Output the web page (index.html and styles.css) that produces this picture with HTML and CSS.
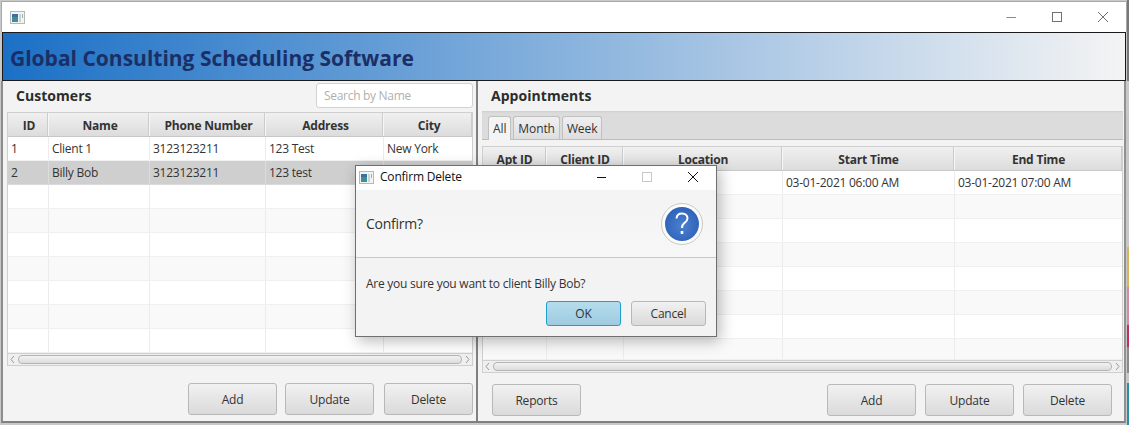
FILE: index.html
```html
<!DOCTYPE html>
<html lang="en">
<head>
<meta charset="utf-8">
<title>Global Consulting Scheduling Software</title>
<link rel="stylesheet" href="styles.css">
</head>
<body>
<div class="window">
  <div class="titlebar">
    <svg class="appicon" width="15" height="13" viewBox="0 0 15 13"><rect x="0.5" y="0.5" width="14" height="12" fill="#f2f4f4" stroke="#b4b8b8"/><rect x="2" y="3" width="6" height="8" fill="#3f8f92"/><rect x="2" y="3" width="6" height="3" fill="#3d6ea0"/><rect x="9" y="3" width="2" height="8" fill="#c4d8d2"/><rect x="12" y="3" width="1" height="4" fill="#9fb0a8"/></svg>
    <div class="winctrls">
      <svg width="12" height="12" viewBox="0 0 12 12"><path d="M1.5 6.5H11" stroke="#8a8a8a" fill="none"/></svg>
      <svg width="12" height="12" viewBox="0 0 12 12"><rect x="1.5" y="1.5" width="9" height="9" stroke="#707070" fill="none"/></svg>
      <svg width="12" height="12" viewBox="0 0 12 12"><path d="M1 1L11 11M11 1L1 11" stroke="#707070" fill="none"/></svg>
    </div>
  </div>
  <header class="banner"><h1>Global Consulting Scheduling Software</h1></header>
  <main class="panes">
    <section class="pane pane-left">
      <div class="panehead">
        <h2>Customers</h2>
        <div class="search">Search by Name</div>
      </div>
      <div class="table table-cust">
        <div class="row headrow"><div>ID</div><div>Name</div><div>Phone Number</div><div>Address</div><div>City</div></div>
        <div class="row"><div>1</div><div>Client 1</div><div>3123123211</div><div>123 Test</div><div>New York</div></div>
        <div class="row selected"><div>2</div><div>Billy Bob</div><div>3123123211</div><div>123 test</div><div></div></div>
        <div class="row"><div></div><div></div><div></div><div></div><div></div></div>
        <div class="row alt"><div></div><div></div><div></div><div></div><div></div></div>
        <div class="row"><div></div><div></div><div></div><div></div><div></div></div>
        <div class="row alt"><div></div><div></div><div></div><div></div><div></div></div>
        <div class="row"><div></div><div></div><div></div><div></div><div></div></div>
        <div class="row alt"><div></div><div></div><div></div><div></div><div></div></div>
        <div class="row"><div></div><div></div><div></div><div></div><div></div></div>
        <div class="scrollbar"><svg width="7" height="9" viewBox="0 0 7 9"><path d="M5 1L2 4.5L5 8" stroke="#9a9a9a" fill="none"/></svg><div class="thumb"></div><svg width="7" height="9" viewBox="0 0 7 9"><path d="M2 1L5 4.5L2 8" stroke="#9a9a9a" fill="none"/></svg></div>
      </div>
      <div class="actions actions-left">
        <button class="btn">Add</button><button class="btn">Update</button><button class="btn">Delete</button>
      </div>
    </section>
    <section class="pane pane-right">
      <div class="panehead"><h2>Appointments</h2></div>
      <div class="tabs">
        <div class="tab active">All</div><div class="tab">Month</div><div class="tab">Week</div>
      </div>
      <div class="table table-appt">
        <div class="row headrow"><div>Apt ID</div><div>Client ID</div><div>Location</div><div>Start Time</div><div>End Time</div></div>
        <div class="row"><div></div><div></div><div>New York</div><div>03-01-2021 06:00 AM</div><div>03-01-2021 07:00 AM</div></div>
        <div class="row alt"><div></div><div></div><div></div><div></div><div></div></div>
        <div class="row"><div></div><div></div><div></div><div></div><div></div></div>
        <div class="row alt"><div></div><div></div><div></div><div></div><div></div></div>
        <div class="row"><div></div><div></div><div></div><div></div><div></div></div>
        <div class="row alt"><div></div><div></div><div></div><div></div><div></div></div>
        <div class="row"><div></div><div></div><div></div><div></div><div></div></div>
        <div class="row alt short"><div></div><div></div><div></div><div></div><div></div></div>
        <div class="scrollbar"><svg width="7" height="9" viewBox="0 0 7 9"><path d="M5 1L2 4.5L5 8" stroke="#9a9a9a" fill="none"/></svg><div class="thumb"></div><svg width="7" height="9" viewBox="0 0 7 9"><path d="M2 1L5 4.5L2 8" stroke="#9a9a9a" fill="none"/></svg></div>
      </div>
      <div class="actions actions-right">
        <button class="btn">Reports</button>
        <div class="actions-group"><button class="btn">Add</button><button class="btn">Update</button><button class="btn">Delete</button></div>
      </div>
    </section>
  </main>
  <div class="dialog">
    <div class="dlg-title">
      <svg class="appicon" width="15" height="13" viewBox="0 0 15 13"><rect x="0.5" y="0.5" width="14" height="12" fill="#f2f4f4" stroke="#b4b8b8"/><rect x="2" y="3" width="6" height="8" fill="#3f8f92"/><rect x="2" y="3" width="6" height="3" fill="#3d6ea0"/><rect x="9" y="3" width="2" height="8" fill="#c4d8d2"/><rect x="12" y="3" width="1" height="4" fill="#9fb0a8"/></svg>
      <span class="dlg-name">Confirm Delete</span>
      <div class="dlg-ctrls">
        <svg width="12" height="12" viewBox="0 0 12 12"><path d="M2 6.5H11" stroke="#111" fill="none"/></svg>
        <svg width="12" height="12" viewBox="0 0 12 12"><rect x="1.5" y="1.5" width="9" height="9" stroke="#c8c8c8" fill="none"/></svg>
        <svg width="12" height="12" viewBox="0 0 12 12"><path d="M1 1L11 11M11 1L1 11" stroke="#111" fill="none"/></svg>
      </div>
    </div>
    <div class="dlg-head">
      <span>Confirm?</span>
      <svg class="qicon" width="42" height="42" viewBox="0 0 42 42"><defs><radialGradient id="q" cx="50%" cy="55%" r="55%"><stop offset="0" stop-color="#4a80d0"/><stop offset="1" stop-color="#2e62b8"/></radialGradient></defs><circle cx="21" cy="21" r="20.5" fill="#fbfbfb" stroke="#c8c8c8"/><circle cx="21" cy="21" r="17" fill="url(#q)"/><path d="M15.5 15.5C15.8 12 18 10.5 21 10.5C24.2 10.5 26.5 12.4 26.5 15.3C26.5 18 24.8 19 23 20.4C21.6 21.5 21 22.4 21 25" fill="none" stroke="#fff" stroke-width="2"/><rect x="19.7" y="28" width="2.6" height="3" fill="#fff"/></svg>
    </div>
    <div class="dlg-body">
      <p>Are you sure you want to client Billy Bob?</p>
      <div class="dlg-actions">
        <button class="btn btn-ok">OK</button><button class="btn btn-cancel">Cancel</button>
      </div>
    </div>
  </div>
  <div class="desktop">
    <i class="seg seg-a"></i><i class="seg seg-b"></i><i class="seg seg-c"></i><i class="seg seg-d"></i><i class="seg seg-e"></i><i class="seg seg-f"></i><i class="seg seg-h"></i><i class="seg seg-g"></i>
  </div>
</div>
</body>
</html>
```
FILE: styles.css
```css
* { box-sizing: border-box; }
html, body { margin: 0; padding: 0; }
body {
  width: 1129px;
  height: 425px;
  overflow: hidden;
  background: #c9c9c9;
  font-family: "Open Sans", "Noto Sans", sans-serif;
  font-size: 12px;
  color: #333;
}
.window {
  position: relative;
  width: 1129px;
  height: 425px;
  padding: 1px 3px 2px 1px;
  display: flex;
  flex-direction: column;
}
.titlebar {
  height: 31px;
  flex: none;
  background: #fff;
  display: flex;
  align-items: center;
  padding-left: 8px;
  border-top: 1px solid #a8a8a8;
  border-left: 1px solid #a8a8a8;
  border-right: 1px solid #a8a8a8;
  margin-right: -1px;
}
.appicon { flex: none; }
.winctrls {
  margin-left: auto;
  display: flex;
  gap: 34px;
  padding-right: 17px;
}
.banner {
  flex: none;
  height: 49px;
  margin-left: 1px;
  border: 1px solid #1a1a1a;
  background: linear-gradient(90deg, #1b70c6 0%, #f4f4f4 100%);
  display: flex;
  align-items: center;
  padding: 2px 0 0 7px;
}
.banner h1 {
  margin: 0;
  font-size: 21px;
  font-weight: 700;
  color: #1b2f66;
  letter-spacing: 0;
  white-space: nowrap;
}
.panes {
  flex: 1;
  display: flex;
  border-left: 2px solid #8c8c8c;
  border-bottom: 2px solid #808080;
  border-right: 2px solid #909090;
  background: #f3f3f3;
  min-height: 0;
}
.pane { display: flex; flex-direction: column; }
.pane-left {
  width: 473px;
  flex: none;
  padding: 0 3px 0 4px;
}
.pane-right {
  flex: 1;
  border-left: 2px solid #808080;
  padding: 0 1px 0 4px;
  min-width: 0;
}
.panehead {
  height: 31px;
  flex: none;
  display: flex;
  align-items: center;
  justify-content: space-between;
}
.panehead h2 {
  margin: 0 0 1px 9px;
  font-size: 14px;
  font-weight: 700;
  color: #2c2c2c;
  letter-spacing: 0.05px;
}
.pane-left .panehead h2 { margin-bottom: 3px; }
.pane-right .panehead { height: 30px; }
.pane-right .panehead h2 { margin-left: 9px; }
.search {
  width: 157px;
  height: 25px;
  margin-bottom: 2px;
  background: #fff;
  border: 1px solid #d2d2d2;
  border-radius: 3px;
  color: #b0b0b0;
  padding-left: 7px;
  line-height: 23px;
  letter-spacing: -0.3px;
}
.table {
  flex: none;
  border: 1px solid #cfcfcf;
  background: #fff;
}
.row {
  display: grid;
  height: 24px;
  background: #fff;
  border-bottom: 1px solid #f0f0f0;
  line-height: 23px;
  letter-spacing: -0.25px;
}
.table-cust .row { grid-template-columns: 41px 101px 116px 118px 1fr; }
.table-appt .row { grid-template-columns: 64px 77px 159px 172px 1fr; }
.row > div {
  border-right: 1px solid #ececec;
  padding-left: 3px;
  white-space: nowrap;
  overflow: hidden;
}
.row > div:last-child { border-right: 0; }
.row.alt { background: #f9f9f9; }
.row.short { height: 21px; }
.row.selected { background: #cfcfcf; color: #333; border-bottom-color: #dadada; }
.row.selected > div { border-right-color: #dcdcdc; }
.headrow {
  background: linear-gradient(#f0f0f0, #dcdcdc);
  border-bottom: 1px solid #c8c8c8;
  font-weight: 700;
  color: #333;
  letter-spacing: -0.2px;
}
.headrow > div {
  text-align: center;
  padding: 1px 0 0;
  border-right: 1px solid #f6f6f6;
  box-shadow: inset -1px 0 0 #cccccc;
}
.table-cust .headrow > div { padding-left: 2px; }
.scrollbar {
  height: 12px;
  display: flex;
  align-items: center;
  gap: 2px;
  padding: 0 1px;
  background: #efefef;
  border-top: 1px solid #cfcfcf;
}
.thumb {
  flex: 1;
  height: 9px;
  border: 1px solid #b4b4b4;
  border-radius: 4px;
  background: linear-gradient(#f2f2f2, #dcdcdc);
}
.actions {
  flex: 1;
  display: flex;
  align-items: flex-start;
}
.actions-left { justify-content: flex-end; gap: 8px; padding-top: 17px; }
.actions-left .btn:last-child { margin-left: 2px; }
.actions-right { justify-content: space-between; padding: 11px 11px 0 10px; }
.actions-group { display: flex; gap: 9px; }
.btn {
  width: 89px;
  height: 32px;
  border: 1px solid #b8b8b8;
  border-radius: 3px;
  background: linear-gradient(#f1f1f1, #dadada);
  font: inherit;
  letter-spacing: -0.2px;
  color: #333;
  padding: 0;
}
.tabs {
  flex: none;
  height: 29px;
  background: #dcdcdc;
  border-bottom: 1px solid #bcbcbc;
  box-shadow: inset 0 2px 2px -1px #cfcfcf;
  display: flex;
  align-items: flex-end;
  gap: 2px;
  padding-left: 6px;
  margin-bottom: 6px;
}
.tab {
  height: 23px;
  padding: 0 4px;
  border: 1px solid #c0c0c0;
  border-bottom: 0;
  border-radius: 3px 3px 0 0;
  background: linear-gradient(#f0f0f0, #dedede);
  line-height: 23px;
  letter-spacing: -0.1px;
}
.tab.active {
  background: #f4f4f4;
  height: 24px;
  margin-bottom: -1px;
  color: #333;
}
.dialog {
  position: absolute;
  left: 355px;
  top: 165px;
  width: 362px;
  height: 172px;
  background: #f3f3f3;
  border: 1px solid #6f6f6f;
  box-shadow: 3px 4px 14px rgba(0,0,0,.28);
  display: flex;
  flex-direction: column;
}
.dlg-title {
  flex: none;
  height: 24px;
  background: #fff;
  display: flex;
  align-items: center;
  padding: 0 0 2px 3px;
  color: #111;
}
.dlg-name { margin: 0 0 1px 6px; letter-spacing: -0.2px; }
.dlg-ctrls {
  margin-left: auto;
  display: flex;
  gap: 34px;
  padding-right: 17px;
}
.dlg-head {
  flex: none;
  height: 68px;
  border-bottom: 1px solid #c8c8c8;
  background: linear-gradient(#f3f3f3, #f7f7f7);
  display: flex;
  align-items: center;
  justify-content: space-between;
  padding: 0 13px 0 10px;
  font-size: 14px;
  letter-spacing: -0.25px;
}
.dlg-body { flex: 1; padding: 17px 10px 0; }
.dlg-body p { margin: 0; line-height: 18px; letter-spacing: -0.25px; }
.dlg-actions {
  display: flex;
  justify-content: flex-end;
  gap: 10px;
  margin-top: 8px;
}
.dlg-actions .btn { width: 75px; height: 25px; }
.btn-ok {
  background: linear-gradient(#b4dcee, #9fcbe0);
  border: 1px solid #1d9fd0;
}
.desktop {
  position: absolute;
  right: 0;
  top: 0;
  width: 2px;
  height: 425px;
  display: flex;
  flex-direction: column;
}
.seg { display: block; }
.seg-a { height: 81px; background: #777; }
.seg-b { height: 166px; background: #c8c8c8; }
.seg-c { height: 40px; background: #d8b45a; }
.seg-d { height: 38px; background: #d88aa0; }
.seg-e { height: 22px; background: #c0305a; }
.seg-f { height: 26px; background: #8a8a8a; }
.seg-h { height: 10px; background: #c8c8c8; }
.seg-g { flex: 1; background: #2a8fa6; }
```
